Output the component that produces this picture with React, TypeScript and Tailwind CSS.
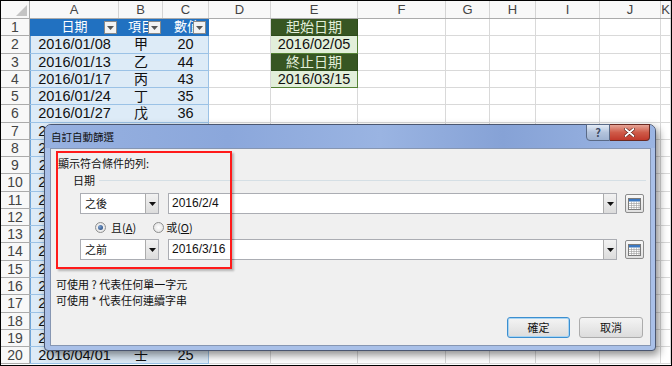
import React from 'react';

interface Col {
  w: string;
  label: string;
}

const cols: Col[] = [
  { w: 'w-[89px]', label: 'A' },
  { w: 'w-[44px]', label: 'B' },
  { w: 'w-[46px]', label: 'C' },
  { w: 'w-[62px]', label: 'D' },
  { w: 'w-[87px]', label: 'E' },
  { w: 'w-[88px]', label: 'F' },
  { w: 'w-[44px]', label: 'G' },
  { w: 'w-[46px]', label: 'H' },
  { w: 'w-[64px]', label: 'I' },
  { w: 'w-[61px]', label: 'J' },
  { w: 'flex-1', label: 'K' },
];

const data: [string, string, string][] = [
  ['2016/01/08', '甲', '20'],
  ['2016/01/13', '乙', '44'],
  ['2016/01/17', '丙', '43'],
  ['2016/01/24', '丁', '35'],
  ['2016/01/27', '戊', '36'],
  ['2016/02/02', '己', '28'],
  ['2016/02/06', '庚', '31'],
  ['2016/02/11', '辛', '47'],
  ['2016/02/15', '壬', '22'],
  ['2016/02/19', '癸', '39'],
  ['2016/02/24', '甲', '41'],
  ['2016/02/29', '乙', '33'],
  ['2016/03/04', '丙', '26'],
  ['2016/03/09', '丁', '45'],
  ['2016/03/14', '戊', '30'],
  ['2016/03/18', '己', '38'],
  ['2016/03/23', '庚', '27'],
  ['2016/03/28', '辛', '42'],
  ['2016/04/01', '壬', '25'],
];

const sideCells: Record<number, { text: string; dark: boolean }> = {
  1: { text: '起始日期', dark: true },
  2: { text: '2016/02/05', dark: false },
  3: { text: '終止日期', dark: true },
  4: { text: '2016/03/15', dark: false },
};

const FilterBtn = () => (
  <span className="absolute right-[2px] top-[2px] flex h-[13px] w-[13px] items-center justify-center border border-[#8a8a8a] bg-[#f3f3f3]">
    <svg width="7" height="4" viewBox="0 0 7 4">
      <path d="M0 0h7L3.5 4z" fill="#555" />
    </svg>
  </span>
);

const Grid = () => {
  const rows = Array.from({ length: 20 }, (_, i) => i + 1);
  return (
    <div className="flex flex-col font-['Liberation_Sans','Noto_Sans_CJK_TC',sans-serif]">
      {/* column header */}
      <div className="flex h-[18px] border-b border-[#ababab] bg-[#f8f8f8]">
        <div className="relative w-[29px] shrink-0 border-r border-[#ababab]">
          <svg className="absolute bottom-[2px] right-[2px]" width="11" height="11" viewBox="0 0 11 11">
            <path d="M11 0v11H0z" fill="#c4c4c4" />
          </svg>
        </div>
        {cols.map((c) => (
          <div
            key={c.label}
            className={`${c.w} shrink-0 border-r border-[#d4d4d4] text-center text-[13px] leading-[17px] text-[#444]`}
          >
            {c.label}
          </div>
        ))}
      </div>

      {rows.map((r) => {
        const d = r >= 2 ? data[r - 2] : null;
        const side = sideCells[r];
        return (
          <div key={r} className="flex h-[17.28px]">
            <div className="w-[29px] shrink-0 border-r border-b border-[#ababab] bg-[#f8f8f8] text-center text-[14px] leading-[16px] text-[#444]">
              {r}
            </div>
            {r === 1 ? (
              <>
                <div className="relative w-[89px] shrink-0 border-b border-[#2171c1] bg-[#2171c1] text-center text-[13px] leading-[16px] text-white">
                  日期
                  <FilterBtn />
                </div>
                <div className="relative w-[44px] shrink-0 overflow-hidden border-b border-[#2171c1] bg-[#2171c1] pl-[9px] text-[13px] leading-[16px] text-white">
                  項目
                  <FilterBtn />
                </div>
                <div className="relative w-[46px] shrink-0 overflow-hidden border-r border-b border-[#2171c1] bg-[#2171c1] pl-[11px] text-[13px] leading-[16px] text-white">
                  數值
                  <FilterBtn />
                </div>
              </>
            ) : (
              <>
                <div className="w-[89px] shrink-0 border-b border-[#9bc2e6] bg-[#ddebf7] text-center text-[14.5px] leading-[16px] text-[#111] shadow-[inset_1px_0_0_#6fa5d8]">
                  {d?.[0]}
                </div>
                <div className="w-[44px] shrink-0 border-b border-[#9bc2e6] bg-[#ddebf7] text-center text-[14px] leading-[16px] text-[#111]">
                  {d?.[1]}
                </div>
                <div className="w-[46px] shrink-0 border-r border-b border-[#9bc2e6] bg-[#ddebf7] text-center text-[14.5px] leading-[16px] text-[#111]">
                  {d?.[2]}
                </div>
              </>
            )}
            <div className="w-[62px] shrink-0 border-r border-b border-[#d9d9d9]" />
            {side ? (
              <div
                className={`w-[87px] shrink-0 border-r border-b text-center leading-[16px] ${
                  side.dark
                    ? 'border-[#2c4a1a] bg-[#375623] text-[14px] text-[#e2efda]'
                    : 'border-[#548235] bg-[#e2efda] text-[14.5px] text-[#111]'
                }`}
              >
                {side.text}
              </div>
            ) : (
              <div className="w-[87px] shrink-0 border-r border-b border-[#d9d9d9]" />
            )}
            {cols.slice(5).map((c) => (
              <div key={c.label} className={`${c.w} shrink-0 border-r border-b border-[#d9d9d9]`} />
            ))}
          </div>
        );
      })}
    </div>
  );
};

const DropArrow = () => (
  <span className="flex h-full w-[13px] items-center justify-center border-l border-[#acacac] bg-[linear-gradient(180deg,#f2f2f2,#dcdcdc)]">
    <svg width="7" height="4" viewBox="0 0 7 4">
      <path d="M0 0h7L3.5 4z" fill="#111" />
    </svg>
  </span>
);

const Combo = ({ text }: { text: string }) => (
  <div className="flex h-[21px] w-[79px] items-stretch border border-[#abadb3] bg-white">
    <span className="flex-1 pl-[4px] text-[11px] leading-[19px]">{text}</span>
    <DropArrow />
  </div>
);

const DateInput = ({ text }: { text: string }) => (
  <div className="ml-[9px] flex h-[21px] w-[449px] items-stretch border border-[#abadb3] bg-white">
    <span className="flex-1 pl-[3px] font-['Liberation_Sans',sans-serif] text-[12px] leading-[19px] text-[#111]">
      {text}
    </span>
    <DropArrow />
  </div>
);

const CalendarBtn = () => (
  <div className="ml-[8px] mt-[1px] flex h-[19px] w-[19px] items-center justify-center rounded-[2px] border border-[#8c8c8c] bg-[linear-gradient(180deg,#f7f7f7,#e0e0e0)]">
    <svg width="13" height="13" viewBox="0 0 13 13">
      <rect x="0.5" y="1.5" width="12" height="11" fill="#fff" stroke="#7a7a7a" />
      <rect x="1" y="2" width="11" height="2.5" fill="#3b78c2" />
      <path d="M1 6.5h11M1 8.5h11M1 10.5h11M3.5 4.5v8M6 4.5v8M8.5 4.5v8M11 4.5v8" stroke="#9a9a9a" strokeWidth="0.6" />
    </svg>
  </div>
);

const Radio = ({ on }: { on: boolean }) => (
  <span className="flex h-[11px] w-[11px] items-center justify-center rounded-full border border-[#8e8f8f] bg-[radial-gradient(circle,#ffffff,#dcdcdc)]">
    {on && <span className="h-[5px] w-[5px] rounded-full bg-[radial-gradient(circle_at_35%_35%,#7a9fd0,#1a3e72)]" />}
  </span>
);

const Dialog = () => (
  <div className="absolute left-[43px] top-[123px] flex h-[227px] w-[612px] flex-col rounded-t-[7px] rounded-b-[4px] border border-[#4a5670] bg-[#a9c0e8] shadow-[3px_4px_8px_rgba(0,0,0,0.45)] font-['Noto_Sans_CJK_TC',sans-serif]">
    {/* title bar */}
    <div className="relative flex h-[23px] shrink-0 items-center rounded-t-[6px] bg-[linear-gradient(90deg,#97b1e0_0%,#8ba7db_30%,#9ab4e2_55%,#86a2d6_75%,#9bb5e3_100%)] pl-[6px] text-[10.5px] text-[#111]">
      自訂自動篩選
      <div className="absolute right-[5px] top-[-1px] flex h-[17px]">
        <div className="flex w-[24px] items-center justify-center rounded-bl-[4px] border border-[#5a6a86] bg-[linear-gradient(180deg,#e3ebf6,#b3c3dc_50%,#9fb2d0)] text-[11px] font-bold text-[#3c4a62]">
          ?
        </div>
        <div className="flex w-[40px] items-center justify-center rounded-br-[4px] border border-l-0 border-[#6a2a22] bg-[linear-gradient(180deg,#e6a597,#cf5b49_50%,#c0392b)]">
          <svg width="11" height="9" viewBox="0 0 11 9">
            <path d="M1.5 1l8 7M9.5 1l-8 7" stroke="#5a1a12" strokeWidth="3" strokeLinecap="round" />
            <path d="M1.5 1l8 7M9.5 1l-8 7" stroke="#fff" strokeWidth="1.8" strokeLinecap="round" />
          </svg>
        </div>
      </div>
    </div>

    {/* client area */}
    <div className="relative ml-[5px] flex h-[198px] w-[601px] flex-col border border-[#8696b2] bg-[#f0f0f0] text-[11px] text-[#111]">
      <div className="pointer-events-none absolute left-[5px] top-[2px] h-[118px] w-[176px] border-2 border-[#ff1a1a] shadow-[2px_2px_2px_rgba(0,0,0,0.25)]" />

      <div className="mt-[6px] h-[16px] pl-[7px] leading-[16px]">顯示符合條件的列:</div>
      <div className="mt-[1px] flex h-[16px] items-center pl-[22px] leading-[16px]">
        日期
        <div className="ml-[4px] mr-[4px] flex-1 border-t border-[#d5dfe5]" />
      </div>

      <div className="mt-[5px] flex h-[21px] pl-[29px]">
        <Combo text="之後" />
        <DateInput text="2016/2/4" />
        <CalendarBtn />
      </div>

      <div className="mt-[5px] flex h-[16px] items-center pl-[44px]">
        <Radio on />
        <span className="ml-[5px]">
          且(<span className="underline">A</span>)
        </span>
        <span className="ml-[17px]" />
        <Radio on={false} />
        <span className="ml-[2px]">
          或(<span className="underline">O</span>)
        </span>
      </div>

      <div className="mt-[4px] flex h-[21px] pl-[29px]">
        <Combo text="之前" />
        <DateInput text="2016/3/16" />
        <CalendarBtn />
      </div>

      <div className="mt-[16px] h-[16px] pl-[5px] leading-[16px]">可使用 ? 代表任何單一字元</div>
      <div className="h-[16px] pl-[5px] leading-[16px]">可使用 * 代表任何連續字串</div>

      <div className="mt-[9px] flex h-[21px] justify-end gap-[9px] pr-[7px]">
        <button className="w-[63px] rounded-[3px] border border-[#3c8fd0] bg-[linear-gradient(180deg,#f4f4f4,#e8e8e8_50%,#dcdcdc)] text-[11px] shadow-[inset_0_0_0_1px_#a8d4f2]">
          確定
        </button>
        <button className="w-[64px] rounded-[3px] border border-[#acacac] bg-[linear-gradient(180deg,#f4f4f4,#e8e8e8_50%,#dcdcdc)] text-[11px]">
          取消
        </button>
      </div>
    </div>
  </div>
);

const App: React.FC = () => {
  return (
    <div className="relative h-[366px] w-[672px] overflow-hidden border border-black bg-white">
      <Grid />
      <Dialog />
    </div>
  );
};

export default App;
